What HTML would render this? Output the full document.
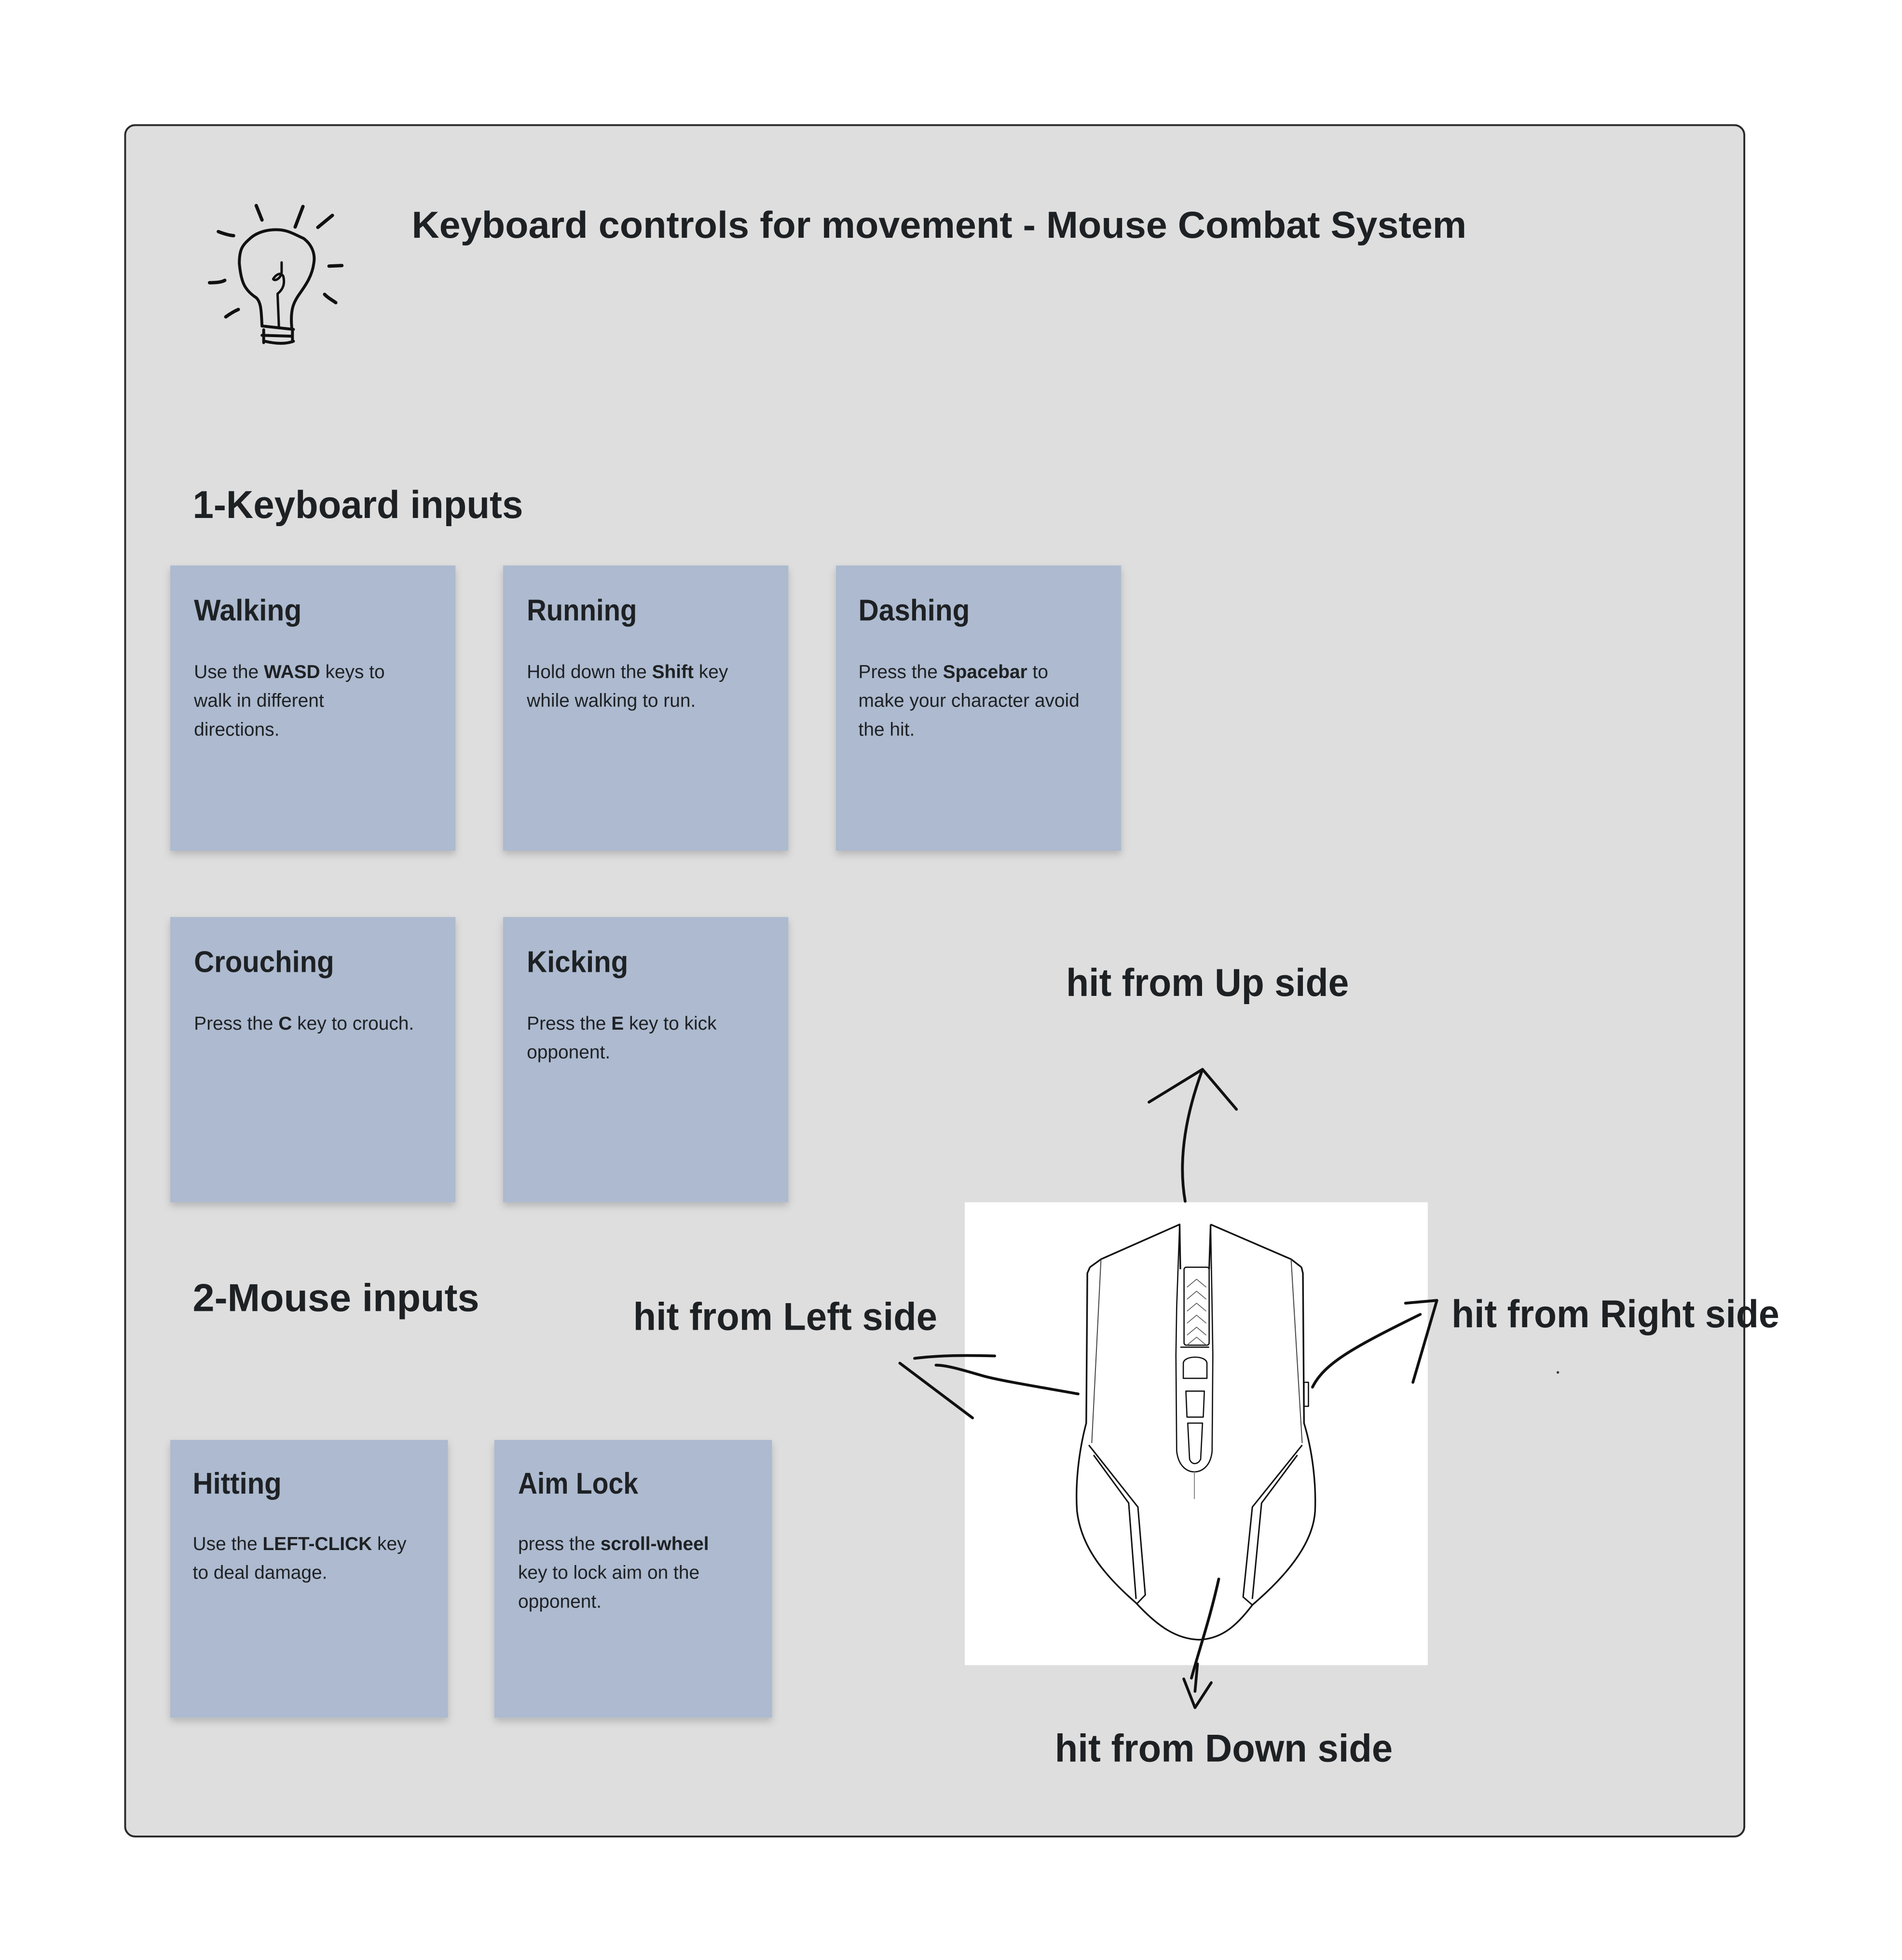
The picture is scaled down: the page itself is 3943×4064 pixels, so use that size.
<!DOCTYPE html>
<html><head><meta charset="utf-8"><style>
html,body{margin:0;padding:0;background:#fff;}
svg{display:block;}
text{font-family:"Liberation Sans",Arial,sans-serif;fill:#1e2124;}
.h{font-weight:bold;}
.b{font-size:15px;}
</style></head><body>
<svg width="3943" height="4064" viewBox="0 0 1520 1566.7" xmlns="http://www.w3.org/2000/svg">
<defs>
<filter id="sh" x="-10%" y="-10%" width="130%" height="130%">
<feDropShadow dx="0" dy="3" stdDeviation="3" flood-color="#000" flood-opacity="0.18"/>
</filter>
</defs>
<rect x="0" y="0" width="1520" height="1567" fill="#fff"/>
<rect x="100" y="100" width="1294" height="1368" rx="8" fill="#dedede" stroke="#2a2a2a" stroke-width="1.5"/>

<!-- lightbulb -->
<g transform="translate(92.5,92.5) scale(0.2705,0.1475)" fill="none" stroke="#111" stroke-linecap="round" stroke-linejoin="round">
<path vector-effect="non-scaling-stroke" stroke-width="6" d="M432,1140 C430,1060 430,1000 410,980 C380,940 370,900 365,800 C365,720 375,700 400,660 C420,630 450,615 480,618 C510,620 530,645 555,665 C580,700 590,750 585,800 C580,870 560,920 545,960 C525,1010 515,1050 520,1150"/>
<path vector-effect="non-scaling-stroke" stroke-width="6" d="M435,1140 L525,1158 M432,1190 L520,1195 M440,1222 C470,1235 500,1240 525,1222 M437,1160 L437,1230 M522,1160 L522,1225"/>
<path vector-effect="non-scaling-stroke" stroke-width="5" d="M482,1145 L478,965 C495,940 500,910 495,870 C485,840 470,870 465,885 C470,900 490,880 490,845 L490,795"/>
<path vector-effect="non-scaling-stroke" stroke-width="7" d="M415,487 L432,565 M553,492 L530,603 M640,540 L597,605 M303,628 C320,640 335,648 348,650 M630,815 L668,812 M277,905 C300,905 315,900 322,892 M617,968 C625,985 640,1000 650,1013 M325,1090 C340,1070 352,1058 362,1050"/>
</g>

<text class="h" x="329" y="190" font-size="30" textLength="843" lengthAdjust="spacingAndGlyphs">Keyboard controls for movement -  Mouse Combat System</text>
<text class="h" x="154" y="414" font-size="31" textLength="264" lengthAdjust="spacingAndGlyphs">1-Keyboard inputs</text>
<text class="h" x="154" y="1048" font-size="31" textLength="229" lengthAdjust="spacingAndGlyphs">2-Mouse inputs</text>

<!-- cards -->
<g filter="url(#sh)" fill="#adbacf">
<rect x="136" y="452" width="228" height="228"/>
<rect x="402" y="452" width="228" height="228"/>
<rect x="668" y="452" width="228" height="228"/>
<rect x="136" y="733" width="228" height="228"/>
<rect x="402" y="733" width="228" height="228"/>
<rect x="136" y="1151" width="222" height="222"/>
<rect x="395" y="1151" width="222" height="222"/>
</g>

<text class="h" x="155" y="496" font-size="24" textLength="86" lengthAdjust="spacingAndGlyphs">Walking</text>
<text class="b" x="155" y="542">Use the <tspan class="h">WASD</tspan> keys to</text>
<text class="b" x="155" y="565">walk in different</text>
<text class="b" x="155" y="588">directions.</text>

<text class="h" x="421" y="496" font-size="24" textLength="88" lengthAdjust="spacingAndGlyphs">Running</text>
<text class="b" x="421" y="542">Hold down the <tspan class="h">Shift</tspan> key</text>
<text class="b" x="421" y="565">while walking to run.</text>

<text class="h" x="686" y="496" font-size="24" textLength="89" lengthAdjust="spacingAndGlyphs">Dashing</text>
<text class="b" x="686" y="542">Press the <tspan class="h">Spacebar</tspan> to</text>
<text class="b" x="686" y="565">make your character avoid</text>
<text class="b" x="686" y="588">the hit.</text>

<text class="h" x="155" y="777" font-size="24" textLength="112" lengthAdjust="spacingAndGlyphs">Crouching</text>
<text class="b" x="155" y="823">Press the <tspan class="h">C</tspan> key to crouch.</text>

<text class="h" x="421" y="777" font-size="24" textLength="81" lengthAdjust="spacingAndGlyphs">Kicking</text>
<text class="b" x="421" y="823">Press the <tspan class="h">E</tspan> key to kick</text>
<text class="b" x="421" y="846">opponent.</text>

<text class="h" x="154" y="1194" font-size="24" textLength="71" lengthAdjust="spacingAndGlyphs">Hitting</text>
<text class="b" x="154" y="1239">Use the <tspan class="h">LEFT-CLICK</tspan> key</text>
<text class="b" x="154" y="1262">to deal damage.</text>

<text class="h" x="414" y="1194" font-size="24" textLength="96" lengthAdjust="spacingAndGlyphs">Aim Lock</text>
<text class="b" x="414" y="1239">press the <tspan class="h">scroll-wheel</tspan></text>
<text class="b" x="414" y="1262">key to lock aim on the</text>
<text class="b" x="414" y="1285">opponent.</text>

<!-- mouse image -->
<rect x="771" y="961" width="370" height="370" fill="#fff"/>
<g transform="translate(713.2,840.4) scale(0.295,0.3195)" fill="none" stroke="#111" stroke-linejoin="round">
<path vector-effect="non-scaling-stroke" stroke-width="3.4" d="M535,540 L565,520 L778,433 L780,545 M862,433 L1080,520 L1108,540 M862,433 L858,545"/>
<path vector-effect="non-scaling-stroke" stroke-width="3.4" d="M535,540 L528,555 L525,930 C505,1000 495,1080 500,1150 C510,1230 560,1300 660,1380 C720,1440 770,1470 830,1472 C890,1470 930,1440 975,1385 C1070,1310 1140,1230 1145,1150 C1148,1080 1138,1000 1115,930 L1112,555 L1108,540"/>
<path vector-effect="non-scaling-stroke" stroke-width="2" stroke="#444" d="M565,520 L540,980 M1080,520 L1110,980"/>
<path vector-effect="non-scaling-stroke" stroke-width="2.6" d="M778,433 L770,640 L768,760 L770,1000 C775,1040 800,1052 818,1052 C836,1052 862,1040 866,1000 L868,760 L866,640 L862,433"/>
<rect vector-effect="non-scaling-stroke" stroke-width="2.6" x="790" y="540" width="68" height="195" rx="6"/>
<path vector-effect="non-scaling-stroke" stroke-width="1.6" stroke="#555" d="M798,590 L824,570 L850,590 M798,620 L824,600 L850,620 M798,650 L824,630 L850,650 M798,680 L824,660 L850,680 M798,710 L824,690 L850,710 M798,735 L824,715 L850,735"/>
<path vector-effect="non-scaling-stroke" stroke-width="2.6" d="M780,740 L858,740 M788,780 C790,760 850,760 852,780 L852,818 L788,818 Z M795,850 L845,850 L842,915 L798,915 Z M800,930 L840,930 L835,1020 C828,1035 810,1035 805,1020 Z"/>
<path vector-effect="non-scaling-stroke" stroke-width="2" stroke="#888" d="M818,1052 L818,1120"/>
<path vector-effect="non-scaling-stroke" stroke-width="3" d="M532,985 L665,1140 L685,1360 L662,1382 M545,1010 L640,1130 L660,1370 M1110,985 L975,1140 L950,1365 L975,1385 M1097,1010 L1000,1130 L975,1370"/>
<rect vector-effect="non-scaling-stroke" stroke-width="2.6" x="1115" y="828" width="12" height="60"/>
</g>

<!-- arrows -->
<g transform="translate(713.2,840.4) scale(0.295,0.3195)" fill="none" stroke="#111" stroke-linecap="round" stroke-linejoin="round">
<path vector-effect="non-scaling-stroke" stroke-width="5.8" d="M793,375 C775,280 790,170 840,45 M695,127 L840,45 L932,145"/>
<path vector-effect="non-scaling-stroke" stroke-width="5.8" d="M503,857 C400,840 300,825 250,813 C200,800 150,785 118,785 M60,768 C130,760 200,760 277,762 M20,780 L217,917"/>
<path vector-effect="non-scaling-stroke" stroke-width="5.8" d="M1138,840 C1170,780 1250,740 1430,658 M1390,630 L1475,623 L1410,828"/>
<path vector-effect="non-scaling-stroke" stroke-width="5.8" d="M884,1320 C860,1420 830,1500 810,1568"/>
</g>
<path d="M957,1330 L955,1352 M946,1342 L955,1365 L968,1345" fill="none" stroke="#111" stroke-width="2.2" stroke-linecap="round" stroke-linejoin="round"/>

<text class="h" x="852" y="796" font-size="31" textLength="226" lengthAdjust="spacingAndGlyphs">hit from Up side</text>
<text class="h" x="506" y="1063" font-size="31" textLength="243" lengthAdjust="spacingAndGlyphs">hit from Left side</text>
<text class="h" x="1160" y="1061" font-size="31" textLength="262" lengthAdjust="spacingAndGlyphs">hit from Right side</text>
<text class="h" x="843" y="1408" font-size="31" textLength="270" lengthAdjust="spacingAndGlyphs">hit from Down side</text>
<circle cx="1245" cy="1097" r="1" fill="#333"/>
</svg>
</body></html>
